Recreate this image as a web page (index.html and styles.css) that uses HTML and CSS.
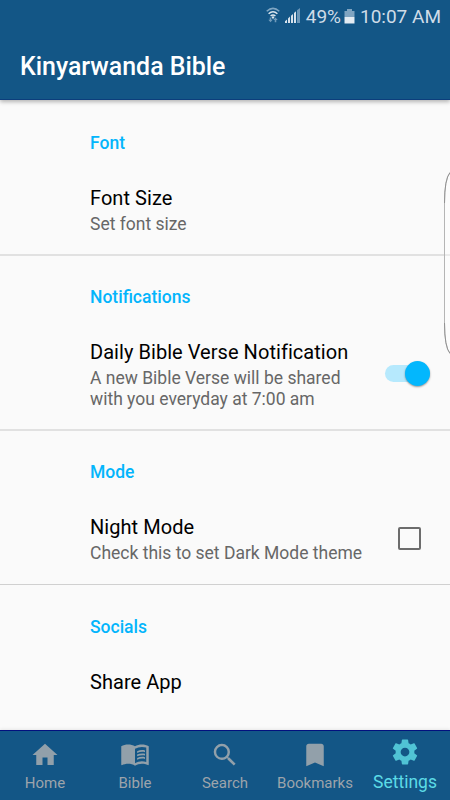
FILE: index.html
```html
<!DOCTYPE html>
<html lang="en">
<head>
<meta charset="utf-8">
<title>Kinyarwanda Bible</title>
<link rel="stylesheet" href="styles.css">
</head>
<body>
<div class="screen">
  <header class="top">
    <div class="status">
      <svg class="wifi" width="14" height="18" viewBox="0 0 14 18">
        <g fill="none" stroke-width="1.5"><path stroke="#7fa6c3" d="M.7 4.2Q7-1.4 13.3 4.2"/><path stroke="#dce7ef" d="M2.6 6.7Q7 2.8 11.4 6.7M4.6 9Q7 6.9 9.4 9"/></g>
        <circle cx="7" cy="10.4" r="1.2" fill="#dce7ef"/>
        <path fill="#6f9aba" d="M3.7 10.5h1.6v2.2h1.4l-2.2 2.6-2.2-2.6h1.4zM8.7 15.3h1.6v-2.2h1.4l-2.2-2.6-2.2 2.6h1.4z"/>
      </svg>
      <svg class="signal" width="17" height="16" viewBox="0 0 17 16">
        <path fill="#d7e2ec" d="M1 13.3 3 11.5V15H1zM4 10.5 6 8.6V15H4zM7 7.8 9 6V15H7zM10 5.1l2-1.9V15h-2z"/>
        <path fill="#6c97b8" d="M13 2.3 16 0v15h-3z"/>
      </svg>
      <span class="percent">49%</span>
      <svg class="battery" width="11" height="15" viewBox="0 0 11 15">
        <path fill="#7fa4c1" d="M3 0h5v2h2.5v6H.5V2H3z"/><path fill="#e3ebf2" d="M.5 8h10v6.5H.5z"/>
      </svg>
      <span class="time">10:07 AM</span>
    </div>
    <h1 class="title">Kinyarwanda Bible</h1>
  </header>
  <main class="list">
    <section class="group">
      <h2 class="category">Font</h2>
      <div class="pref"><div class="text"><div class="name">Font Size</div><div class="summary">Set font size</div></div></div>
    </section>
    <section class="group tall">
      <h2 class="category">Notifications</h2>
      <div class="pref">
        <div class="text"><div class="name">Daily Bible Verse Notification</div><div class="summary">A new Bible Verse will be shared<br>with you everyday at 7:00 am</div></div>
        <div class="switch"><div class="thumb"></div></div>
      </div>
    </section>
    <section class="group thin">
      <h2 class="category">Mode</h2>
      <div class="pref">
        <div class="text"><div class="name">Night Mode</div><div class="summary">Check this to set Dark Mode theme</div></div>
        <div class="checkbox"></div>
      </div>
    </section>
    <section class="group last">
      <h2 class="category">Socials</h2>
      <div class="pref"><div class="text"><div class="name">Share App</div></div></div>
    </section>
  </main>
  <nav class="tabs">
    <div class="tab"><svg viewBox="0 0 24 24"><path d="M10 20v-6h4v6h5v-8h3L12 3 2 12h3v8z"/></svg><span>Home</span></div>
    <div class="tab"><svg viewBox="0 0 24 24"><path fill-rule="evenodd" d="M12 5C10.5 4 8.400 3.500 6.500 3.500S2.500 4 1 5v14.650c0 .25.25.5.5.5C2.850 19.500 4.800 19 6.500 19c1.950 0 4.050.4 5.500 1.500 1.350-.85 3.800-1.500 5.500-1.500 1.650 0 3.350.3 4.750 1.050.4.2.75-.1.75-.5V5c-1.500-1.100-3.550-1.500-5.500-1.500S13.500 4 12 5zM21 17.500c-1.100-.35-2.300-.5-3.500-.5-1.700 0-4.150.65-5.500 1.500V7c1.350-.85 3.800-1.500 5.500-1.500 1.200 0 2.400.15 3.500.5z"/><path d="M20 8.300v1.400c-2-.5-4.300-.3-6.300.6V8.900c2-.9 4.200-1.100 6.300-.6zm0 2.700v1.400c-2-.5-4.300-.3-6.300.6v-1.400c2-.9 4.200-1.100 6.300-.6zm0 2.700v1.400c-2-.5-4.300-.3-6.300.6v-1.400c2-.9 4.200-1.100 6.300-.6z"/></svg><span>Bible</span></div>
    <div class="tab"><svg viewBox="0 0 24 24"><path d="M15.500 14h-.79l-.28-.27A6.471 6.471 0 0 0 16 9.500 6.500 6.500 0 1 0 9.500 16c1.610 0 3.090-.59 4.230-1.570l.27.28v.79l5 4.990L20.490 19l-4.990-5zm-6 0C7.010 14 5 11.990 5 9.500S7.010 5 9.500 5 14 7.010 14 9.500 11.990 14 9.500 14z"/></svg><span>Search</span></div>
    <div class="tab"><svg viewBox="0 0 24 24"><path d="M17 3H7c-1.100 0-1.990.9-1.990 2L5 21l7-3 7 3V5c0-1.100-.9-2-2-2z"/></svg><span>Bookmarks</span></div>
    <div class="tab active"><svg viewBox="0 0 24 24"><path d="M19.430 12.980c.04-.32.07-.64.07-.98s-.03-.66-.07-.98l2.110-1.650c.19-.15.24-.42.12-.64l-2-3.460c-.12-.22-.39-.3-.61-.22l-2.490 1c-.52-.4-1.080-.73-1.690-.98l-.38-2.650C14.460 2.180 14.250 2 14 2h-4c-.25 0-.46.18-.49.42l-.38 2.650c-.61.25-1.170.59-1.690.98l-2.490-1c-.23-.09-.49 0-.61.22l-2 3.460c-.13.22-.07.49.12.64l2.110 1.650c-.04.32-.07.65-.07.98s.03.66.07.98l-2.110 1.650c-.19.15-.24.42-.12.64l2 3.460c.12.22.39.3.61.22l2.490-1c.52.4 1.080.73 1.690.98l.38 2.650c.03.24.24.42.49.42h4c.25 0 .46-.18.49-.42l.38-2.650c.61-.25 1.170-.59 1.690-.98l2.490 1c.23.09.49 0 .61-.22l2-3.460c.12-.22.07-.49-.12-.64zM12 15.500c-1.930 0-3.500-1.570-3.500-3.500s1.570-3.500 3.500-3.500 3.500 1.570 3.500 3.500-1.570 3.500-3.500 3.500z"/></svg><span>Settings</span></div>
  </nav>
  <svg class="edge-handle" width="7" height="184" viewBox="0 0 7 184">
    <path d="M7 1.500Q1.500 8 1.500 32V152Q1.500 176 7 182.500" fill="#fff" fill-opacity=".35" stroke="#b5b5b5"/>
    <path d="M7 1.500Q1.500 8 1.500 32M1.500 152Q1.500 176 7 182.500" fill="none" stroke="#888" stroke-width=".8"/>
  </svg>
</div>
</body>
</html>
```

FILE: styles.css
```css
* { box-sizing: border-box; }
body { margin: 0; font-family: Roboto, "Liberation Sans", sans-serif; }
h1, h2 { margin: 0; font-weight: 500; }
.screen {
  position: relative;
  display: flex;
  flex-direction: column;
  width: 450px;
  height: 800px;
  overflow: hidden;
  background: #fafafa;
}
.top {
  position: relative;
  flex: none;
  height: 100px;
  background: #135686;
  border-bottom: 1px solid #0c3e7c;
  box-shadow: 0 2px 4px rgba(0, 0, 0, .28);
}
.status {
  display: flex;
  justify-content: flex-end;
  align-items: center;
  height: 32px;
  padding-right: 9px;
  color: #cfdce8;
  font-size: 19px;
  white-space: nowrap;
}
.wifi { margin-right: 4px; }
.signal { margin-right: 5px; }
.battery { margin: 0 5px 0 3px; }
.title {
  padding-left: 20px;
  color: #fff;
  font-size: 24.9px;
  line-height: 69px;
}
.list { flex: 1; min-height: 0; }
.group {
  height: 155px;
  padding: 33px 20px 0 90px;
  border-bottom: 1px solid #e1e1e1;
}
.group:first-child { height: 156px; border-bottom-width: 2px; }
.tall { height: 175px; padding-top: 31px; border-bottom-width: 2px; }
.thin { height: 154px; padding-top: 31px; border-color: #d0d0d0; }
.last { height: auto; padding-top: 32px; border-bottom: 0; }
.category {
  color: #03b5fc;
  font-size: 17.5px;
  line-height: 20px;
}
.pref {
  display: flex;
  justify-content: space-between;
  align-items: center;
  margin-top: 33px;
  white-space: nowrap;
}
.name { color: #000; font-size: 20px; line-height: 24px; letter-spacing: .05px; }
.summary { margin-top: 4px; color: #676767; font-size: 17.5px; line-height: 20.5px; }
.switch {
  display: flex;
  justify-content: flex-end;
  align-items: center;
  width: 45px;
  height: 17px;
  margin-bottom: 3px;
  border-radius: 9px;
  background: #b6e9fd;
}
.thumb {
  width: 25px;
  height: 25px;
  flex: none;
  border-radius: 50%;
  background: #03b7fd;
  box-shadow: 0 1px 2px rgba(0, 0, 0, .4);
}
.checkbox {
  width: 23px;
  height: 23px;
  margin: 0 9px 1px 0;
  border: 2px solid #6c6c6c;
  border-radius: 2px;
}
.tabs {
  position: relative;
  display: grid;
  grid-template-columns: repeat(5, 90px);
  flex: none;
  height: 70px;
  background: #135686;
  border-top: 1px solid #02107e;
  box-shadow: 0 -1px 3px rgba(0, 0, 0, .08);
}
.tab {
  display: flex;
  flex-direction: column;
  align-items: center;
  padding-top: 9px;
  color: #9da4ab;
  font-size: 15px;
  line-height: 18px;
}
.tab svg { width: 30px; height: 30px; margin-bottom: 4px; fill: #92a0aa; }
.active { padding-top: 6px; color: #5cdbe6; font-size: 17.5px; line-height: 22px; }
.active svg { fill: #50c3d5; }
.edge-handle { position: absolute; top: 171px; right: 0; }
```
